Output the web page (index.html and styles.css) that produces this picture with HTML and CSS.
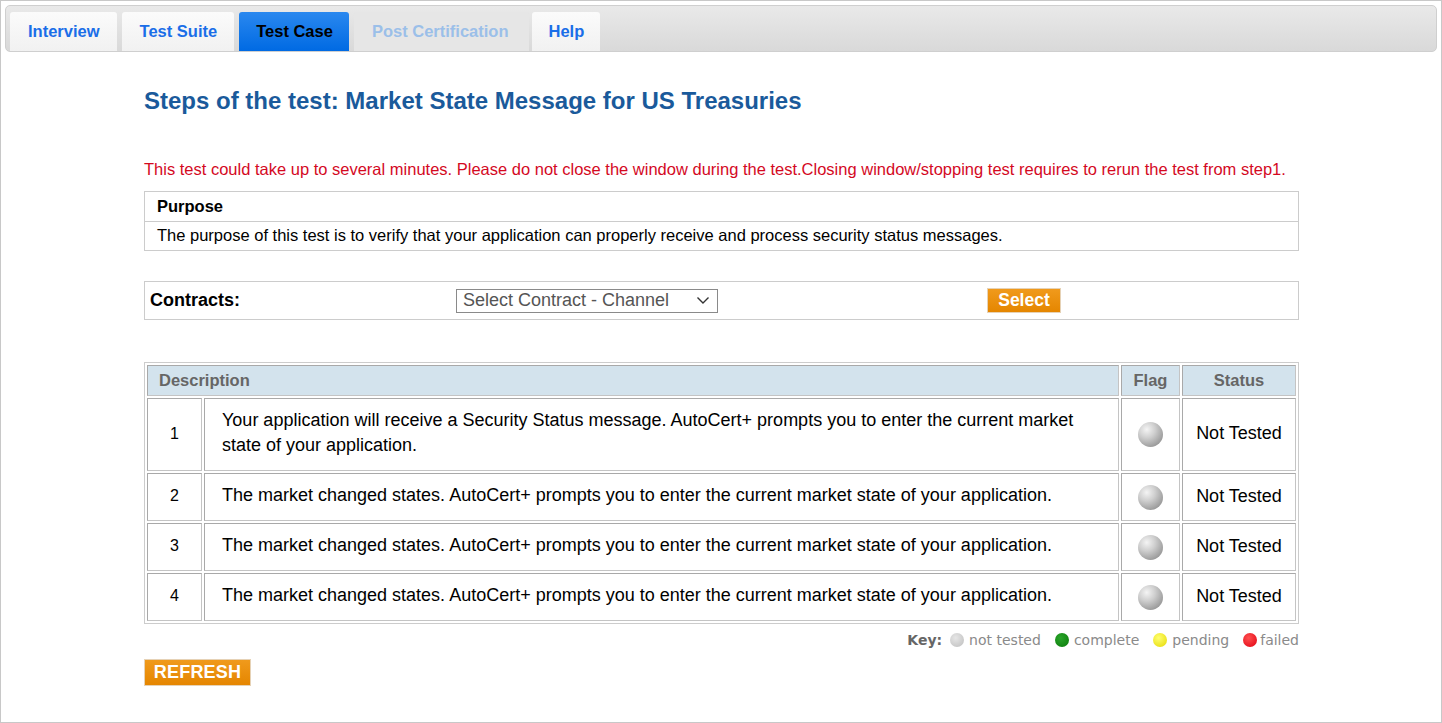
FILE: index.html
```html
<!DOCTYPE html>
<html>
<head>
<meta charset="utf-8">
<link rel="stylesheet" href="styles.css">
<title>Test Case</title>
</head>
<body>
<div class="frame">
  <nav class="tabbar">
    <a class="tab">Interview</a>
    <a class="tab">Test Suite</a>
    <a class="tab active">Test Case</a>
    <a class="tab disabled">Post Certification</a>
    <a class="tab help">Help</a>
  </nav>
  <main class="content">
    <h1 class="title">Steps of the test: Market State Message for US Treasuries</h1>
    <p class="warning">This test could take up to several minutes. Please do not close the window during the test.Closing window/stopping test requires to rerun the test from step1.</p>
    <section class="purpose">
      <div class="purpose-head">Purpose</div>
      <div class="purpose-body">The purpose of this test is to verify that your application can properly receive and process security status messages.</div>
    </section>
    <section class="contracts">
      <div class="contracts-label">Contracts:</div>
      <div class="contracts-select">
        <div class="select">
          <span>Select Contract - Channel</span>
          <svg class="chev" width="14" height="9" viewBox="0 0 14 9"><path d="M1.5 1.5 L7 7 L12.5 1.5" fill="none" stroke="#333" stroke-width="1.4"/></svg>
        </div>
      </div>
      <div class="contracts-btn"><span class="btn btn-select">Select</span></div>
    </section>
    <table class="steps">
      <thead>
        <tr>
          <th colspan="2" class="th-desc">Description</th>
          <th class="th-flag">Flag</th>
          <th class="th-status">Status</th>
        </tr>
      </thead>
      <tbody>
        <tr class="row-tall">
          <td class="num">1</td>
          <td class="desc">Your application will receive a Security Status message. AutoCert+ prompts you to enter the current market state of your application.</td>
          <td class="flag"><span class="ball"></span></td>
          <td class="status">Not Tested</td>
        </tr>
        <tr>
          <td class="num">2</td>
          <td class="desc">The market changed states. AutoCert+ prompts you to enter the current market state of your application.</td>
          <td class="flag"><span class="ball"></span></td>
          <td class="status">Not Tested</td>
        </tr>
        <tr>
          <td class="num">3</td>
          <td class="desc">The market changed states. AutoCert+ prompts you to enter the current market state of your application.</td>
          <td class="flag"><span class="ball"></span></td>
          <td class="status">Not Tested</td>
        </tr>
        <tr>
          <td class="num">4</td>
          <td class="desc">The market changed states. AutoCert+ prompts you to enter the current market state of your application.</td>
          <td class="flag"><span class="ball"></span></td>
          <td class="status">Not Tested</td>
        </tr>
      </tbody>
    </table>
    <div class="key">
      <b>Key:</b>
      <span class="dot dot-gray"></span><span class="key-label">not tested</span>
      <span class="dot dot-green"></span><span class="key-label">complete</span>
      <span class="dot dot-yellow"></span><span class="key-label">pending</span>
      <span class="dot dot-red tight-dot"></span><span class="key-label last">failed</span>
    </div>
    <div class="actions"><span class="btn btn-refresh">REFRESH</span></div>
  </main>
</div>
</body>
</html>
```

FILE: styles.css
```css
* { box-sizing: border-box; }
html, body { margin: 0; padding: 0; background: #fff; }
body {
  font-family: "Liberation Sans", Arial, sans-serif;
  color: #000;
  width: 1442px;
  height: 723px;
  overflow: hidden;
}
.frame {
  width: 1442px;
  height: 723px;
  border: 1px solid #c8c8c8;
  padding: 4px 4px 0 4px;
}
.tabbar {
  display: flex;
  gap: 5px;
  align-items: flex-end;
  height: 47px;
  padding: 6px 0 0 4px;
  border: 1px solid #cfcfcf;
  border-radius: 5px;
  background: linear-gradient(#e9e9e9, #d9d9d9);
}
.tab {
  display: flex;
  align-items: center;
  height: 39px;
  padding: 0 17px 0 18px;
  font-weight: bold;
  font-size: 16.5px;
  color: #1a6ee8;
  background: linear-gradient(#fbfbfb, #f1f1f1);
  border-radius: 3px 3px 0 0;
  cursor: pointer;
}
.tab.active {
  background: linear-gradient(#2a88ef, #006ae3);
  color: #000;
  padding: 0 16px 0 17px;
}
.tab.disabled {
  background: #e6e6e6;
  color: #9bbfe9;
  padding: 0 20px 0 18px;
  margin-right: -2px;
}
.tab.help { padding: 0 16px 0 17px; }
.content {
  width: 1155px;
  margin: 0 0 0 139px;
}
.title {
  margin: 0;
  padding-top: 35px;
  font-size: 24px;
  line-height: 28px;
  color: #1a5a9b;
  font-weight: bold;
}
.warning {
  margin: 44px 0 0 0;
  font-size: 16.5px;
  line-height: 20px;
  color: #d4091f;
}
.purpose {
  margin-top: 12px;
  border: 1px solid #cccccc;
  font-size: 16.5px;
}
.purpose-head {
  font-weight: bold;
  padding: 0 12px;
  height: 30px;
  line-height: 29px;
  border-bottom: 1px solid #cccccc;
}
.purpose-body {
  padding: 0 12px;
  height: 28px;
  line-height: 27px;
}
.contracts {
  margin-top: 30px;
  border: 1px solid #cccccc;
  height: 39px;
  display: grid;
  grid-template-columns: 311px 531px 1fr;
  align-items: center;
}
.contracts-label {
  font-weight: bold;
  font-size: 18px;
  padding-left: 5px;
}
.select {
  width: 262px;
  height: 24px;
  border: 1px solid #8a8a8a;
  display: flex;
  align-items: center;
  justify-content: space-between;
  padding: 0 6px 0 6px;
  font-size: 18px;
  color: #555;
  background: #fff;
}
.chev { margin-right: 1px; }
.btn {
  display: inline-flex;
  align-items: center;
  justify-content: center;
  color: #fff;
  font-weight: bold;
  font-size: 17.5px;
  background: linear-gradient(#f09a1c, #e58600);
  border: 1px solid #e6d2b6;
}
.btn-select {
  width: 74px;
  height: 25px;
}
.steps {
  margin-top: 42px;
  width: 1155px;
  border: 1px solid #cccccc;
  border-spacing: 2px;
  border-collapse: separate;
  font-size: 18px;
}
.steps th, .steps td {
  border: 1px solid #a9a9a9;
  border-right-color: #c4c4c4;
  border-bottom-color: #c4c4c4;
  padding: 0;
}
.steps td { padding-bottom: 2px; }
.steps th {
  background: #d3e3ed;
  color: #666;
  font-size: 16.5px;
  height: 31px;
}
.th-desc { text-align: left; padding-left: 11px !important; }
.th-flag { width: 59px; }
.th-status { width: 114px; }
.num { width: 55px; text-align: center; font-size: 16px; }
.steps td.desc { padding: 0 40px 4px 17px; line-height: 25px; }
.steps tbody tr { height: 48px; }
.steps tbody tr.row-tall { height: 73px; }
.flag { text-align: center; }
.steps td.flag { padding-bottom: 0; }
.status { text-align: center; }
.ball {
  display: inline-block;
  width: 25px;
  height: 25px;
  border-radius: 50%;
  vertical-align: middle;
  background: radial-gradient(circle at 35% 30%, #f4f4f4 0%, #cfcfcf 35%, #8f8f8f 85%, #7a7a7a 100%);
}
.key {
  display: flex;
  justify-content: flex-end;
  align-items: center;
  margin-top: 6px;
  font-family: "DejaVu Sans", Verdana, sans-serif;
  font-size: 14px;
  color: #8a8a8a;
  height: 20px;
}
.key b { color: #666; margin-right: 8px; }
.dot {
  display: inline-block;
  width: 14px;
  height: 14px;
  border-radius: 50%;
  margin-right: 5px;
}
.dot.tight-dot { margin-right: 3px; }
.dot-gray { background: radial-gradient(circle at 40% 35%, #e6e6e6, #bdbdbd); }
.dot-green { background: radial-gradient(circle at 40% 35%, #2aa52a, #0a7a0a); }
.dot-yellow { background: radial-gradient(circle at 40% 35%, #ffff70, #e5d800); }
.dot-red { background: radial-gradient(circle at 40% 35%, #ff5050, #e00010); }
.key-label { margin-right: 14px; }
.key-label.last { margin-right: 0; }
.actions { margin-top: 9px; }
.btn-refresh {
  width: 107px;
  height: 27px;
  font-size: 18px;
  letter-spacing: 0.2px;
}
```
